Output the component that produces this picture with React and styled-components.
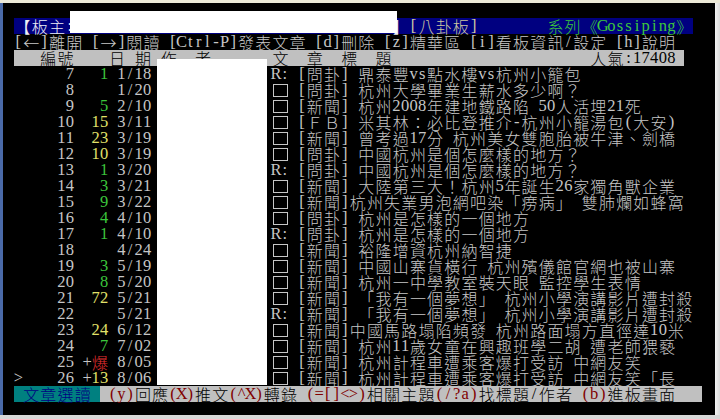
import React from 'react'
import styled, { createGlobalStyle } from 'styled-components'

const COL = 8.6
const ROW = 16

const FG = '#c6c6c6'
const NAVY = '#000080'
const GREY = '#c0c0c0'
const TEAL = '#008080'
const DKRED = '#800000'
const GREEN = '#3cc63c'
const YELLOW = '#e2e26a'
const RED = '#e83030'
const BEIGE = '#cfc7a2'

const GlobalStyle = createGlobalStyle`
  html, body {
    margin: 0;
    padding: 0;
    background: #000;
    overflow: hidden;
  }
`

const Window = styled.div`
  width: 720px;
  height: 419px;
  display: flex;
  flex-direction: column;
  background: #d4d0c8;
`

const TopChrome = styled.div`
  height: 3px;
  background: #ece9d8;
  flex: none;
`

const Middle = styled.div`
  flex: none;
  height: 412px;
  display: flex;
`

const LeftBorder = styled.div`
  width: 3px;
  background: #4a6aa8;
  flex: none;
`

const RightBorder = styled.div`
  width: 5px;
  flex: none;
  background: linear-gradient(90deg, #f4f4f4, #dcdcdc);
`

const BottomChrome = styled.div`
  flex: 1;
  background: #d8d8d8;
`

const Terminal = styled.div`
  position: relative;
  flex: 1;
  background: #000;
  padding: 15px 0 0 11px;
  overflow: hidden;
`

const Row = styled.div`
  display: flex;
  height: ${ROW}px;
  line-height: ${ROW}px;
  white-space: pre;
  color: ${FG};
`

const Seg = styled.span`
  display: inline-flex;
  color: ${p => p.$fg || FG};
  background: ${p => p.$bg || 'transparent'};
`

const Cell = styled.span`
  display: inline-flex;
  justify-content: center;
  align-items: center;
  flex: none;
  width: ${p => (p.$wide ? COL * 2 : COL)}px;
  height: ${ROW}px;
  line-height: ${ROW}px;
  font-family: ${p => (p.$wide ? '"Noto Sans CJK TC", "Noto Sans CJK SC", sans-serif' : '"Liberation Serif", serif')};
  font-size: ${p => (p.$wide ? 16 : 16.5)}px;
  font-weight: ${p => (p.$wide ? 300 : 400)};
`

const HollowSquare = styled.span`
  width: 15px;
  height: 13px;
  box-sizing: border-box;
  border: 1px solid currentColor;
  margin-top: 1px;
`

const BoardMasterMask = styled.div`
  position: absolute;
  left: 67px;
  top: 8px;
  width: 327px;
  height: 22px;
  background: #fff;
`

const AuthorMask = styled.div`
  position: absolute;
  left: 154px;
  top: 56px;
  width: 110px;
  height: 326px;
  background: #fff;
`

const s = (t, c, b) => ({ t, c, b })
const sp = n => ' '.repeat(n)

function Char({ ch }) {
  const wide = ch.charCodeAt(0) > 0x7f
  if (ch === '□') {
    return (
      <Cell $wide>
        <HollowSquare />
      </Cell>
    )
  }
  return <Cell $wide={wide}>{ch}</Cell>
}

function Line({ segs }) {
  return (
    <Row>
      {segs.map((g, i) => (
        <Seg key={i} $fg={g.c} $bg={g.b}>
          {[...g.t].map((ch, j) => (
            <Char key={j} ch={ch} />
          ))}
        </Seg>
      ))}
    </Row>
  )
}

const articles = [
  { n: 7, rec: '1', rc: GREEN, d: '1/18', re: true, cat: '問卦', title: ' 鼎泰豐vs點水樓vs杭州小籠包' },
  { n: 8, d: '1/20', cat: '問卦', title: ' 杭州大學畢業生薪水多少啊？' },
  { n: 9, rec: '5', rc: GREEN, d: '2/10', cat: '新聞', title: ' 杭州2008年建地鐵路陷 50人活埋21死' },
  { n: 10, rec: '15', rc: YELLOW, d: '3/11', cat: 'ＦＢ', title: ' 米其林：必比登推介-杭州小籠湯包(大安)' },
  { n: 11, rec: '23', rc: YELLOW, d: '3/19', cat: '新聞', title: ' 曾考過17分 杭州美女雙胞胎被牛津、劍橋' },
  { n: 12, rec: '10', rc: YELLOW, d: '3/19', cat: '問卦', title: ' 中國杭州是個怎麼樣的地方？' },
  { n: 13, rec: '1', rc: GREEN, d: '3/20', re: true, cat: '問卦', title: ' 中國杭州是個怎麼樣的地方？' },
  { n: 14, rec: '3', rc: GREEN, d: '3/21', cat: '新聞', title: ' 大陸第三大！杭州5年誕生26家獨角獸企業' },
  { n: 15, rec: '9', rc: GREEN, d: '3/22', cat: '新聞', title: '杭州失業男泡網吧染「痨病」 雙肺爛如蜂窩' },
  { n: 16, rec: '4', rc: GREEN, d: '4/10', cat: '問卦', title: ' 杭州是怎樣的一個地方' },
  { n: 17, rec: '1', rc: GREEN, d: '4/10', re: true, cat: '問卦', title: ' 杭州是怎樣的一個地方' },
  { n: 18, d: '4/24', cat: '新聞', title: ' 裕隆增資杭州納智捷' },
  { n: 19, rec: '3', rc: GREEN, d: '5/19', cat: '新聞', title: ' 中國山寨貨橫行 杭州殯儀館官網也被山寨' },
  { n: 20, rec: '8', rc: GREEN, d: '5/20', cat: '新聞', title: ' 杭州一中學教室裝天眼 監控學生表情' },
  { n: 21, rec: '72', rc: YELLOW, d: '5/21', cat: '新聞', title: ' 「我有一個夢想」 杭州小學演講影片遭封殺' },
  { n: 22, d: '5/21', re: true, cat: '新聞', title: ' 「我有一個夢想」 杭州小學演講影片遭封殺' },
  { n: 23, rec: '24', rc: YELLOW, d: '6/12', cat: '新聞', title: '中國馬路塌陷頻發 杭州路面塌方直徑達10米' },
  { n: 24, rec: '7', rc: GREEN, d: '7/02', cat: '新聞', title: ' 杭州11歲女童在興趣班學二胡 遭老師猥褻' },
  { n: 25, unread: true, rec: '爆', rc: RED, d: '8/05', cat: '新聞', title: ' 杭州計程車遭乘客爆打受訪 中網友笑' },
  { n: 26, cur: true, unread: true, rec: '13', rc: YELLOW, d: '8/06', cat: '新聞', title: ' 杭州計程車遭乘客爆打受訪 中網友笑「長' },
]

function articleSegs(a) {
  const rec = a.rec ? (a.rec === '爆' ? a.rec : a.rec.padStart(2)) : '  '
  return [
    s((a.cur ? '>' : ' ') + String(a.n).padStart(6) + ' ' + (a.unread ? '+' : ' ')),
    s(rec, a.rc),
    s(' ' + a.d.padStart(4) + ' ' + sp(13)),
    s((a.re ? 'R:' : '□') + ' [' + a.cat + ']' + a.title),
  ]
}

const headerSegs = [
  s('【板主:' + sp(37) + '】', '#eeeef6', NAVY),
  s('[八卦板]', BEIGE, NAVY),
  s(sp(8), FG, NAVY),
  s('系列《Gossiping》', GREEN, NAVY),
]

const menuSegs = [
  s('[←]離開 [→]閱讀 [Ctrl-P]發表文章 [d]刪除 [z]精華區 [i]看板資訊/設定 [h]說明'),
]

const columnSegs = [
  s('   編號    日 期 作  者       文  章  標  題' + sp(23) + '人氣:17408 ', '#000', GREY),
]

const footerSegs = [
  s(' 文章選讀 ', NAVY, TEAL),
  s(' ', '#000', GREY),
  s('(y)', DKRED, GREY),
  s('回應', '#000', GREY),
  s('(X)', DKRED, GREY),
  s('推文', '#000', GREY),
  s('(^X)', DKRED, GREY),
  s('轉錄 ', '#000', GREY),
  s('(=[]<>)', DKRED, GREY),
  s('相關主題', '#000', GREY),
  s('(/?a)', DKRED, GREY),
  s('找標題/作者 ', '#000', GREY),
  s('(b)', DKRED, GREY),
  s('進板畫面   ', '#000', GREY),
]

export default function App() {
  return (
    <>
      <GlobalStyle />
      <Window>
        <TopChrome />
        <Middle>
          <LeftBorder />
          <Terminal>
            <Line segs={headerSegs} />
            <Line segs={menuSegs} />
            <Line segs={columnSegs} />
            {articles.map(a => (
              <Line key={a.n} segs={articleSegs(a)} />
            ))}
            <Line segs={footerSegs} />
            <BoardMasterMask />
            <AuthorMask />
          </Terminal>
          <RightBorder />
        </Middle>
        <BottomChrome />
      </Window>
    </>
  )
}
